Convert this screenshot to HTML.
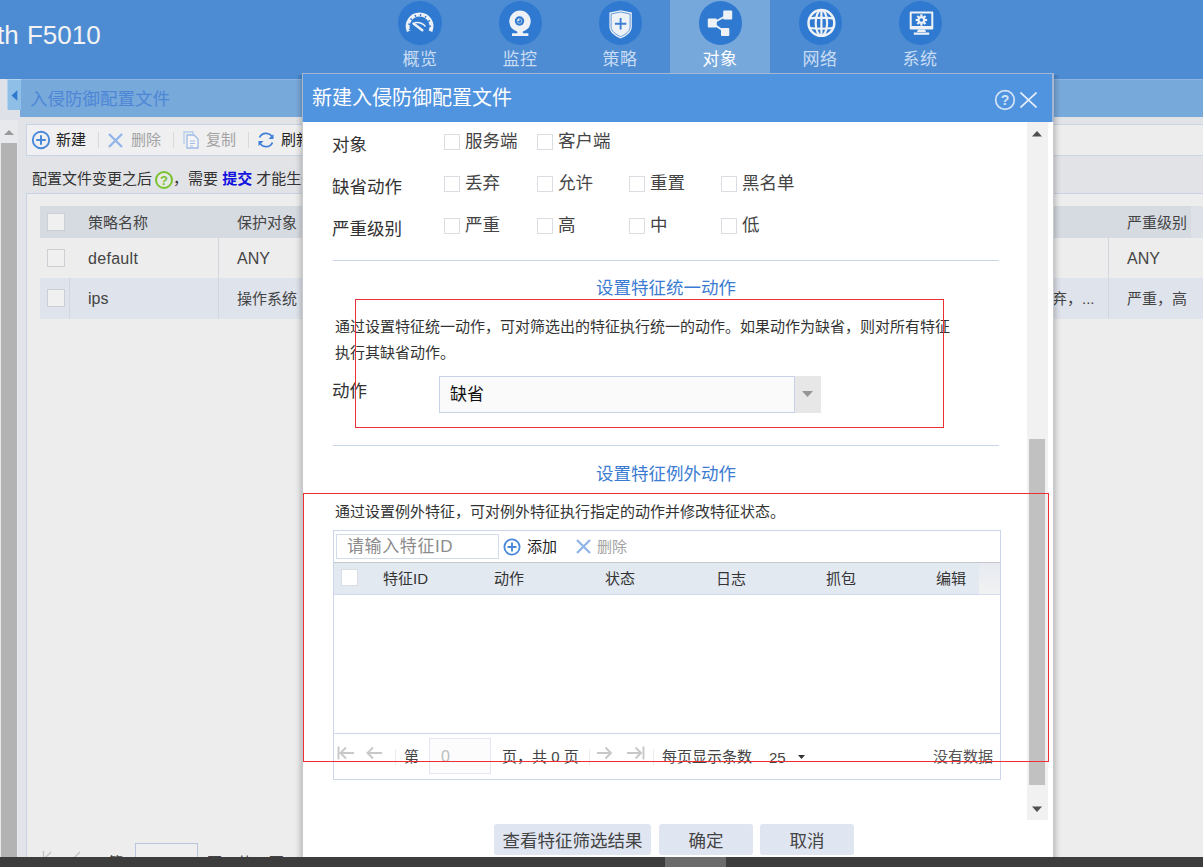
<!DOCTYPE html>
<html lang="zh-CN">
<head>
<meta charset="utf-8">
<title>新建入侵防御配置文件</title>
<style>
*{box-sizing:border-box;margin:0;padding:0}
html,body{width:1203px;height:867px;overflow:hidden;background:#ededed}
body{font-family:"Liberation Sans","Noto Sans CJK SC",sans-serif;font-size:14px;color:#333;position:relative}
.abs{position:absolute}
.t{position:absolute;white-space:nowrap;line-height:1}
/* header */
#hdr{left:0;top:0;width:1203px;height:79px;background:#4d8cd3}
#tabact{left:670px;top:0;width:100px;height:73px;background:#77a8dc}
.circ{position:absolute;top:1.400px;width:43.400px;height:43.400px;border-radius:50%;background:#2f7ad0}
.nl{position:absolute;top:51px;width:100px;text-align:center;font-size:17px;letter-spacing:.5px;line-height:18px;color:#c9dcf3}
/* page behind */
#subbar{left:20px;top:79px;width:1183px;height:38px;background:#78a9db;border-top:1px solid #8db5e2}
#collapse{left:7px;top:79px;width:13.500px;height:31px;background:#8fbee7;border-left:1px solid #b4d2ee;border-top:1px solid #b4d2ee}
/* dialog */
#dlg{left:302px;top:73px;width:752px;height:802px;background:#fff;border:1px solid #c9cacd;border-top:none}
#dlgt{left:-1px;top:0;width:752px;height:49px;background:#5093df;border:1px solid #a3b7d3;border-right-width:2px;border-bottom:none}
.cb{position:absolute;width:16px;height:16px;border:1px solid #dadde2;background:#fff}
.lbl{font-size:17.5px;color:#333}
.opt{font-size:17.5px;color:#444}
.hr{position:absolute;left:30px;width:666px;height:1px;background:#c9d5e8}
.sec{position:absolute;left:0;width:726px;text-align:center;font-size:17.500px;line-height:1;color:#3b7cd2}
.p{font-size:15px;color:#333}
.btn{position:absolute;top:751px;height:31px;background:#dfe5f1;border-radius:3px;font-size:17.500px;color:#444;text-align:center;line-height:34px}
.red{position:absolute;border:1px solid #ea3035}
</style>
</head>
<body>
<!-- ============ PAGE BEHIND ============ -->
<div id="hdr" class="abs"></div>
<div id="tabact" class="abs"></div>
<div class="t" style="left:-3px;top:22px;font-size:26px;word-spacing:1px;color:#f3f3f3">th F5010</div>
<div id="nav">
<div class="circ" style="left:398.4px"></div>
<svg class="abs" style="left:398.0px;top:1.400px" width="44" height="44" viewBox="0 0 44 44"><path d="M10.700 30.200 A11.900 11.900 0 1 1 32.500 30.200" fill="none" stroke="#eef1f6" stroke-width="3.900"/><path d="M12.100 29 A10.500 10.500 0 1 1 31.100 29" fill="none" stroke="#2f7ad0" stroke-width="1.900" stroke-dasharray="1.400 3.900"/><path d="M15.500 22.600 L24.300 29.300" stroke="#eef1f6" stroke-width="2.500" stroke-linecap="round" fill="none"/><path d="M16.500 21.800 Q23 20.500 27.500 25.500" stroke="#eef1f6" stroke-width="1.400" fill="none"/></svg>
<div class="nl" style="left:370px">概览</div>
<div class="circ" style="left:498.5px"></div>
<svg class="abs" style="left:498.1px;top:1.400px" width="44" height="44" viewBox="0 0 44 44"><circle cx="22" cy="20.200" r="10.700" fill="#eef1f6"/><circle cx="21.500" cy="20" r="4.700" fill="#2f7ad0"/><circle cx="21.500" cy="20" r="2.300" fill="none" stroke="#eef1f6" stroke-width="0.800" opacity=".75"/><circle cx="20.600" cy="19" r="1" fill="#eef1f6"/><path d="M19.300 30 h5.600 v2.500 h-5.600z M14 32.200 h16.400 v2.800 h-16.400z" fill="#eef1f6"/></svg>
<div class="nl" style="left:470px">监控</div>
<div class="circ" style="left:598.7px"></div>
<svg class="abs" style="left:598.3px;top:1.400px" width="44" height="44" viewBox="0 0 44 44"><path d="M22.600 9.200 L33.800 11.600 V26 C33.800 31 28.500 35 22.600 37.600 C16.700 35 11.400 31 11.400 26 V11.600Z" fill="#eef1f6"/><path d="M22.600 11 L32.100 13 V26 C32.100 30 27.500 33.500 22.600 35.700 C17.700 33.500 13.100 30 13.100 26 V13Z" fill="none" stroke="#2f7ad0" stroke-width="0.900" opacity=".8"/><path d="M22.600 17 V28.400 M16.900 22.700 H28.300" stroke="#3a80d2" stroke-width="1.900"/></svg>
<div class="nl" style="left:570px">策略</div>
<div class="circ" style="left:698.9px"></div>
<svg class="abs" style="left:698.5px;top:1.400px" width="44" height="44" viewBox="0 0 44 44"><path d="M13.500 22.200 L28.500 14 M13.500 22.200 L26 31" stroke="#eef1f6" stroke-width="1.800" fill="none"/><rect x="8.800" y="17.600" width="9" height="9" rx="1" fill="#eef1f6"/><rect x="24.200" y="9.600" width="9" height="9" rx="1" fill="#eef1f6"/><rect x="22" y="26.900" width="8.300" height="8" rx="1" fill="#eef1f6"/></svg>
<div class="nl" style="left:670px;color:#fff">对象</div>
<div class="circ" style="left:799.0px"></div>
<svg class="abs" style="left:798.6px;top:1.400px" width="44" height="44" viewBox="0 0 44 44"><g fill="none" stroke="#eef1f6" stroke-width="2.200"><circle cx="22.400" cy="21.900" r="12.900" stroke-width="2.500"/><ellipse cx="22.400" cy="21.900" rx="5.700" ry="12.900"/><path d="M22.400 9 V34.800 M10.500 17.300 Q22.400 15.800 34.300 17.300 M10.500 27 Q22.400 28.500 34.300 27"/></g></svg>
<div class="nl" style="left:770px">网络</div>
<div class="circ" style="left:899.1px"></div>
<svg class="abs" style="left:898.8px;top:1.400px" width="44" height="44" viewBox="0 0 44 44"><path d="M11.800 10.600 H33.200 Q34.300 10.600 34.300 11.700 V27.400 Q34.300 28.500 33.200 28.500 H11.800 Q10.700 28.500 10.700 27.400 V11.700 Q10.700 10.600 11.800 10.600Z M12.700 12.600 V25 H32.300 V12.600Z" fill="#eef1f6" fill-rule="evenodd"/><rect x="-1.100" y="-5.700" width="2.200" height="3" fill="#eef1f6" transform="translate(22.400 19) rotate(0)"/><rect x="-1.100" y="-5.700" width="2.200" height="3" fill="#eef1f6" transform="translate(22.400 19) rotate(45)"/><rect x="-1.100" y="-5.700" width="2.200" height="3" fill="#eef1f6" transform="translate(22.400 19) rotate(90)"/><rect x="-1.100" y="-5.700" width="2.200" height="3" fill="#eef1f6" transform="translate(22.400 19) rotate(135)"/><rect x="-1.100" y="-5.700" width="2.200" height="3" fill="#eef1f6" transform="translate(22.400 19) rotate(180)"/><rect x="-1.100" y="-5.700" width="2.200" height="3" fill="#eef1f6" transform="translate(22.400 19) rotate(225)"/><rect x="-1.100" y="-5.700" width="2.200" height="3" fill="#eef1f6" transform="translate(22.400 19) rotate(270)"/><rect x="-1.100" y="-5.700" width="2.200" height="3" fill="#eef1f6" transform="translate(22.400 19) rotate(315)"/><circle cx="22.400" cy="19" r="2.800" fill="none" stroke="#eef1f6" stroke-width="2"/><path d="M19 28.500 H26 L27 31 H18Z M14.800 31.600 H30.200 V33.800 H14.800Z" fill="#eef1f6"/></svg>
<div class="nl" style="left:870px">系统</div>
</div>
<div id="subbar" class="abs"></div>
<div id="collapse" class="abs"></div>
<div id="behind">
  <!-- left strip + scrollbar -->
  <div class="abs" style="left:0;top:79px;width:7px;height:38px;background:#dfe1e8"></div>
  <div class="abs" style="left:7px;top:110px;width:13px;height:7px;background:#dfe1e8"></div>
  <svg class="abs" style="left:10.500px;top:90px" width="7" height="11" viewBox="0 0 7 11"><path d="M6.300 0.300 L0.500 5.500 L6.300 10.700Z" fill="#2f78d2"/></svg>
  <div class="t" style="left:30px;top:91px;font-size:17.500px;color:#4d86d6">入侵防御配置文件</div>
  <div class="abs" style="left:0;top:120px;width:18px;height:740px;background:#e8e9ec"></div><div class="abs" style="left:18px;top:124px;width:8px;height:733px;background:#e3e4ea"></div>
  <svg class="abs" style="left:4px;top:130px" width="10" height="5" viewBox="0 0 10 5"><path d="M0 5 L5 0 L10 5Z" fill="#9a9a9a"/></svg>
  <div class="abs" style="left:1px;top:143px;width:16px;height:714px;background:#b3b3b3"></div>
  <!-- toolbar -->
  <div class="abs" style="left:18px;top:117px;width:1185px;height:77px;background:#e2e3e7"></div><div class="abs" style="left:0;top:117px;width:20px;height:3px;background:#dfe1e8"></div><div class="abs" style="left:26px;top:124px;width:1180px;height:32px;background:linear-gradient(90deg,#f0f0f2,#efeff0 25%,#ededed 90%);border:1px solid #c9d3e6"></div>
  <svg class="abs" style="left:31px;top:130px" width="20" height="20" viewBox="0 0 20 20"><circle cx="10" cy="10" r="8.200" fill="none" stroke="#4a88da" stroke-width="1.900"/><path d="M10 5.200 V14.800 M5.200 10 H14.800" stroke="#4a88da" stroke-width="2"/></svg>
  <div class="t" style="left:56px;top:132px;font-size:15px;color:#222">新建</div>
  <div class="abs" style="left:98px;top:132px;width:1px;height:16px;background:#d9d9d9"></div>
  <svg class="abs" style="left:108px;top:133px" width="15" height="15" viewBox="0 0 15 15"><path d="M1 1 L14 14 M14 1 L1 14" stroke="#93b6e8" stroke-width="2.400"/></svg>
  <div class="t" style="left:131px;top:132px;font-size:15px;color:#a3a3a3">删除</div>
  <div class="abs" style="left:173px;top:132px;width:1px;height:16px;background:#d9d9d9"></div>
  <svg class="abs" style="left:183px;top:131px" width="17" height="18" viewBox="0 0 17 18"><path d="M1 13 V1 H10 V3" fill="none" stroke="#b5cbea" stroke-width="1.300"/><path d="M4 4 H11 L15 8 V17 H4Z" fill="#f5f5f6" stroke="#9dbbe6" stroke-width="1.300"/><path d="M7 10 H12 M7 12.500 H12 M7 15 H10" stroke="#9dbbe6" stroke-width="1.200"/></svg>
  <div class="t" style="left:206px;top:132px;font-size:15px;color:#a3a3a3">复制</div>
  <div class="abs" style="left:248px;top:132px;width:1px;height:16px;background:#d9d9d9"></div>
  <svg class="abs" style="left:257px;top:131px" width="18" height="18" viewBox="0 0 18 18"><path d="M15.500 7 A7 7 0 0 0 2.500 6.500 M2.500 11 A7 7 0 0 0 15.500 11.500" fill="none" stroke="#3f7fd6" stroke-width="1.800"/><path d="M16.500 3 V8 H11.500Z M1.500 15 V10 H6.500Z" fill="#3f7fd6"/></svg>
  <div class="t" style="left:281px;top:132px;font-size:15px;color:#222">刷新</div>
  <!-- notice row -->
  
  <div class="t" style="left:32px;top:171px;font-size:15px;color:#333">配置文件变更之后<span style="display:inline-block;width:21px"></span>，需要 <b style="color:#1111dd;font-weight:bold">提交</b> 才能生效</div>
  <svg class="abs" style="left:153.700px;top:169.900px" width="20" height="20" viewBox="0 0 20 20"><circle cx="10" cy="10" r="8" fill="#e6e9e4" stroke="#7ac231" stroke-width="2"/><text x="10" y="14.600" font-size="13" font-weight="bold" text-anchor="middle" fill="#7ac231" font-family="Liberation Sans, sans-serif">?</text></svg>
  <!-- grid container -->
  <div class="abs" style="left:26px;top:193px;width:1180px;height:680px;border-left:1px solid #c9d3e6;border-top:1px solid #c9d3e6;background:#ededed"></div>
  <div class="abs" style="left:40px;top:206px;width:1163px;height:32px;background:#d6dae1"></div><div class="abs" style="left:1191px;top:206px;width:12px;height:32px;background:#dee1e7"></div>
  <div class="abs" style="left:40px;top:278px;width:1163px;height:41px;background:#dfe3eb"></div>
  <div class="cb" style="left:47px;top:213px;width:18px;height:18px;background:#f0f0f0;border-color:#cdcfd4"></div>
  <div class="cb" style="left:47px;top:249px;width:18px;height:18px;background:#f0f0f0;border-color:#cdcfd4"></div>
  <div class="cb" style="left:47px;top:289px;width:18px;height:18px;background:#f0f0f0;border-color:#cdcfd4"></div>
  <div class="abs" style="left:69px;top:278px;width:1px;height:41px;background:#d3d6dc"></div>
  <div class="abs" style="left:218px;top:238px;width:1px;height:81px;background:#d3d6dc"></div>
  <div class="abs" style="left:1108px;top:238px;width:1px;height:81px;background:#d3d6dc"></div>
  <div class="t" style="left:88px;top:215px;font-size:15px;color:#444">策略名称</div>
  <div class="t" style="left:237px;top:215px;font-size:15px;color:#444">保护对象</div>
  <div class="t" style="left:1127px;top:215px;font-size:15px;color:#444">严重级别</div>
  <div class="t" style="left:88px;top:251px;font-size:16px;letter-spacing:.3px;color:#444">default</div>
  <div class="t" style="left:237px;top:251px;font-size:16px;color:#444">ANY</div>
  <div class="t" style="left:1127px;top:251px;font-size:16px;color:#444">ANY</div>
  <div class="t" style="left:88px;top:291px;font-size:16px;color:#444">ips</div>
  <div class="t" style="left:237px;top:291px;font-size:15px;color:#444">操作系统</div>
  <div class="t" style="left:1052px;top:291px;font-size:15px;color:#444">弃，...</div>
  <div class="t" style="left:1127px;top:291px;font-size:15px;color:#444">严重，高</div>
  <!-- bottom paging (cut off) -->
  <div class="abs" style="left:135px;top:843px;width:63px;height:30px;border:1px solid #b9c6de;background:#efeff0"></div>
  <svg class="abs" style="left:42px;top:850px" width="50" height="14" viewBox="0 0 50 14"><path d="M1.500 1 V14 M3 8 H14 M9 2 L3 8 L9 14 M32 8 H43 M38 2 L32 8 L38 14" fill="none" stroke="#c4c4c4" stroke-width="1.400"/></svg>
  <div class="t" style="left:108px;top:855px;font-size:15px;color:#444">第</div>
  <div class="t" style="left:150px;top:854px;font-size:15px;color:#222">1</div>
  <div class="t" style="left:207px;top:855px;font-size:15px;color:#444">页，共 1 页</div>
</div>

<!-- ============ DIALOG ============ -->
<div class="abs" style="left:295px;top:75px;width:7px;height:790px;background:linear-gradient(90deg,rgba(0,0,0,0),rgba(0,0,0,.05) 45%,rgba(0,0,0,.17))"></div>
<div class="abs" style="left:1054px;top:75px;width:7px;height:790px;background:linear-gradient(270deg,rgba(0,0,0,0),rgba(0,0,0,.05) 45%,rgba(0,0,0,.17))"></div>
<div id="dlg" class="abs">
  <div id="dlgt" class="abs"></div>
  <div class="t" style="left:9px;top:15px;font-size:20px;color:#fff">新建入侵防御配置文件</div>
  <div id="dlgbody">
  <svg class="abs" style="left:691px;top:16px" width="22" height="22" viewBox="0 0 22 22"><circle cx="11" cy="11" r="9.300" fill="none" stroke="#d3e4f8" stroke-width="1.700"/><text x="11" y="15.800" font-size="14" font-weight="bold" text-anchor="middle" fill="#d3e4f8" font-family="Liberation Sans, sans-serif">?</text></svg>
  <svg class="abs" style="left:717px;top:19px" width="17" height="16" viewBox="0 0 17 16"><path d="M0.500 0.500 L16.500 15.500 M16.500 0.500 L0.500 15.500" stroke="#e6effb" stroke-width="1.600"/></svg>
  <div class="abs" style="left:724px;top:49px;width:21px;height:698px;background:#f1f1f1"></div>
  <svg class="abs" style="left:729px;top:58px" width="10" height="6" viewBox="0 0 10 6"><path d="M0 5.500 L5 0 L10 5.500Z" fill="#505050"/></svg>
  <svg class="abs" style="left:729px;top:733px" width="10" height="6" viewBox="0 0 10 6"><path d="M0 0.500 L5 6 L10 0.500Z" fill="#505050"/></svg>
  <div class="abs" style="left:726px;top:366px;width:16px;height:346px;background:#c1c1c1"></div>
  <div class="t lbl" style="left:29px;top:64px">对象</div>
  <div class="cb" style="left:141px;top:61px"></div>
  <div class="t opt" style="left:162px;top:60px">服务端</div>
  <div class="cb" style="left:234px;top:61px"></div>
  <div class="t opt" style="left:255px;top:60px">客户端</div>
  <div class="t lbl" style="left:29px;top:106px">缺省动作</div>
  <div class="cb" style="left:141px;top:103px"></div>
  <div class="t opt" style="left:162px;top:102px">丢弃</div>
  <div class="cb" style="left:234px;top:103px"></div>
  <div class="t opt" style="left:255px;top:102px">允许</div>
  <div class="cb" style="left:326px;top:103px"></div>
  <div class="t opt" style="left:347px;top:102px">重置</div>
  <div class="cb" style="left:418px;top:103px"></div>
  <div class="t opt" style="left:439px;top:102px">黑名单</div>
  <div class="t lbl" style="left:29px;top:148px">严重级别</div>
  <div class="cb" style="left:141px;top:145px"></div>
  <div class="t opt" style="left:162px;top:144px">严重</div>
  <div class="cb" style="left:234px;top:145px"></div>
  <div class="t opt" style="left:255px;top:144px">高</div>
  <div class="cb" style="left:326px;top:145px"></div>
  <div class="t opt" style="left:347px;top:144px">中</div>
  <div class="cb" style="left:418px;top:145px"></div>
  <div class="t opt" style="left:439px;top:144px">低</div>
  <div class="hr" style="top:187px"></div>
  <div class="sec" style="left:30px;width:666px;top:207px">设置特征统一动作</div>
  <div class="t p" style="left:32px;top:246px">通过设置特征统一动作，可对筛选出的特征执行统一的动作。如果动作为缺省，则对所有特征</div>
  <div class="t p" style="left:32px;top:272px">执行其缺省动作。</div>
  <div class="t lbl" style="left:29px;top:310px">动作</div>
  <div class="abs" style="left:136px;top:303px;width:356px;height:37px;border:1px solid #c9d3e8;background:#fafafb"></div>
  <div class="t" style="left:147px;top:313px;font-size:17px;color:#111">缺省</div>
  <div class="abs" style="left:492px;top:303px;width:26px;height:37px;background:#e7e7e7"></div>
  <svg class="abs" style="left:499px;top:318px" width="11" height="6" viewBox="0 0 11 6"><path d="M0 0 H11 L5.500 6Z" fill="#959595"/></svg>
  <div class="hr" style="top:372px"></div>
  <div class="sec" style="left:30px;width:666px;top:393px">设置特征例外动作</div>
  <div class="t p" style="left:32px;top:431px">通过设置例外特征，可对例外特征执行指定的动作并修改特征状态。</div>
  <div class="abs" style="left:30px;top:457px;width:668px;height:250px;border:1px solid #ccd6ea"></div>
  <div class="abs" style="left:33px;top:461px;width:163px;height:25px;border:1px solid #d3dcec;background:#fff"></div>
  <div class="t" style="left:44px;top:465px;font-size:17px;letter-spacing:.6px;color:#8c8c8c">请输入特征ID</div>
  <svg class="abs" style="left:200px;top:465px" width="18" height="18" viewBox="0 0 18 18"><circle cx="9" cy="9" r="7.600" fill="none" stroke="#4a88da" stroke-width="1.800"/><path d="M9 4.500 V13.500 M4.500 9 H13.500" stroke="#4a88da" stroke-width="1.900"/></svg>
  <div class="t" style="left:224px;top:466px;font-size:15px;color:#222">添加</div>
  <svg class="abs" style="left:273px;top:466px" width="15" height="15" viewBox="0 0 15 15"><path d="M1 1 L14 14 M14 1 L1 14" stroke="#93b6e8" stroke-width="2.400"/></svg>
  <div class="t" style="left:294px;top:466px;font-size:15px;color:#a3a3a3">删除</div>
  <div class="abs" style="left:31px;top:489px;width:666px;height:33px;background:#e3e9f1;border-top:1px solid #c6c8cc;border-bottom:1px solid #d3dcec"></div>
  <div class="abs" style="left:676px;top:490px;width:21px;height:31px;background:linear-gradient(#e6eaf0,#f2f2f2)"></div>
  <div class="cb" style="left:38px;top:496px;width:17px;height:17px"></div>
  <div class="t" style="left:80px;top:498px;font-size:15px;color:#333">特征ID</div>
  <div class="t" style="left:191px;top:498px;font-size:15px;color:#333">动作</div>
  <div class="t" style="left:302px;top:498px;font-size:15px;color:#333">状态</div>
  <div class="t" style="left:413px;top:498px;font-size:15px;color:#333">日志</div>
  <div class="t" style="left:523px;top:498px;font-size:15px;color:#333">抓包</div>
  <div class="t" style="left:633px;top:498px;font-size:15px;color:#333">编辑</div>
  <div class="abs" style="left:31px;top:660px;width:666px;height:1px;background:#ccd6ea"></div>
  <svg class="abs" style="left:34px;top:673px" width="50" height="14" viewBox="0 0 50 14"><path d="M1.500 0.500 V13.500 M3.500 7 H17 M9 1.500 L3.500 7 L9 12.500 M30 7 H45 M36 1.500 L30.500 7 L36 12.500" fill="none" stroke="#c8c8c8" stroke-width="1.900"/></svg>
  <div class="abs" style="left:92px;top:676px;width:1px;height:16px;background:#ebebeb"></div>
  <div class="t" style="left:101px;top:676px;font-size:15px;color:#444">第</div>
  <div class="abs" style="left:126px;top:665px;width:62px;height:36px;border:1px solid #e2e7f2;background:#fcfcfd"></div>
  <div class="t" style="left:138px;top:676px;font-size:16px;color:#bdbdbd">0</div>
  <div class="t" style="left:199px;top:676px;font-size:15px;color:#444">页，共 0 页</div>
  <div class="abs" style="left:286px;top:676px;width:1px;height:16px;background:#ebebeb"></div>
  <svg class="abs" style="left:294px;top:673px" width="50" height="14" viewBox="0 0 50 14"><path d="M0 7 H14 M8.500 1.500 L14 7 L8.500 12.500 M30 7 H44 M38.500 1.500 L44 7 L38.500 12.500 M46.500 0.500 V13.500" fill="none" stroke="#c8c8c8" stroke-width="1.900"/></svg>
  <div class="abs" style="left:350px;top:676px;width:1px;height:16px;background:#ebebeb"></div>
  <div class="t" style="left:359px;top:676px;font-size:15px;color:#444">每页显示条数</div>
  <div class="t" style="left:466px;top:677px;font-size:15px;color:#444">25</div>
  <svg class="abs" style="left:495px;top:682px" width="7" height="4" viewBox="0 0 7 4"><path d="M0 0 H7 L3.500 4Z" fill="#333"/></svg>
  <div class="t" style="left:630px;top:676px;font-size:15px;color:#555">没有数据</div>
  <div class="btn" style="left:191px;width:157px">查看特征筛选结果</div>
  <div class="btn" style="left:356px;width:94px">确定</div>
  <div class="btn" style="left:457px;width:94px">取消</div>
</div>
</div>

<!-- red annotation boxes -->
<div class="red" style="left:355px;top:299px;width:589px;height:129px"></div>
<div class="red" style="left:303px;top:493px;width:746px;height:269px"></div>

<!-- bottom dark bar -->
<div class="abs" style="left:0;top:857px;width:1203px;height:10px;background:#3d3d3d"></div>
<div class="abs" style="left:665px;top:857px;width:61px;height:10px;background:#6b6b6b"></div>
</body>
</html>
